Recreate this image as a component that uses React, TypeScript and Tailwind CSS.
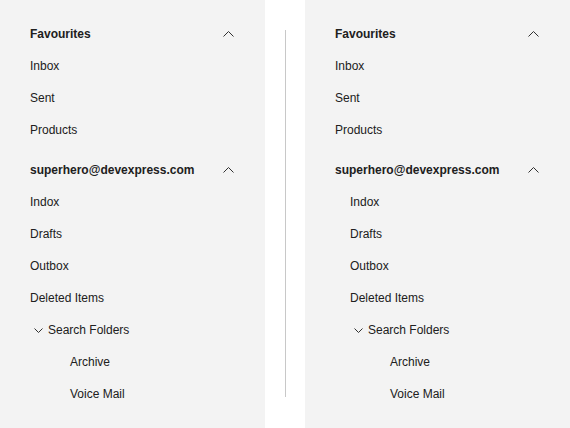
import { ReactNode } from 'react';

const font = { fontFamily: '"Liberation Sans", Arial, sans-serif' };

function ChevronUp() {
  return (
    <svg width="11" height="6" viewBox="0 0 11 6" className="text-[#303030]">
      <path d="M0.5 5.5 L5.5 0.5 L10.5 5.5" fill="none" stroke="currentColor" strokeWidth="1" />
    </svg>
  );
}

function ChevronDown() {
  return (
    <svg width="9" height="5" viewBox="0 0 9 5" className="text-[#303030]">
      <path d="M0.5 0.5 L4.5 4.5 L8.5 0.5" fill="none" stroke="currentColor" strokeWidth="1" />
    </svg>
  );
}

function Header({ title }: { title: string }) {
  return (
    <div className="flex h-8 items-center justify-between font-bold">
      <span>{title}</span>
      <span className="mr-[1px] flex items-center">
        <ChevronUp />
      </span>
    </div>
  );
}

function Item({ children, indent = 0 }: { children: ReactNode; indent?: number }) {
  return (
    <div className="flex h-8 items-center" style={{ paddingLeft: indent }}>
      {children}
    </div>
  );
}

function NavPanel({ nested }: { nested: boolean }) {
  const base = nested ? 15 : 0;
  return (
    <div className="h-[428px] bg-[#f3f3f3] px-[30px] pt-[18px] text-[12px] text-[#202020]" style={font}>
      <Header title="Favourites" />
      <Item>Inbox</Item>
      <Item>Sent</Item>
      <Item>Products</Item>

      <div className="mt-2">
        <Header title="superhero@devexpress.com" />
        <Item indent={base}>Indox</Item>
        <Item indent={base}>Drafts</Item>
        <Item indent={base}>Outbox</Item>
        <Item indent={base}>Deleted Items</Item>
        <Item indent={base + 4}>
          <span className="mr-[5px] flex items-center">
            <ChevronDown />
          </span>
          Search Folders
        </Item>
        <Item indent={base + 40}>Archive</Item>
        <Item indent={base + 40}>Voice Mail</Item>
      </div>
    </div>
  );
}

export default function App() {
  return (
    <div className="flex h-[428px] w-[570px] bg-white">
      <div className="w-[265px]">
        <NavPanel nested={false} />
      </div>
      <div className="flex w-[40px] justify-center">
        <div className="mt-[30px] h-[367px] w-px bg-[#c8c8c8]" />
      </div>
      <div className="flex-1">
        <NavPanel nested={true} />
      </div>
    </div>
  );
}
